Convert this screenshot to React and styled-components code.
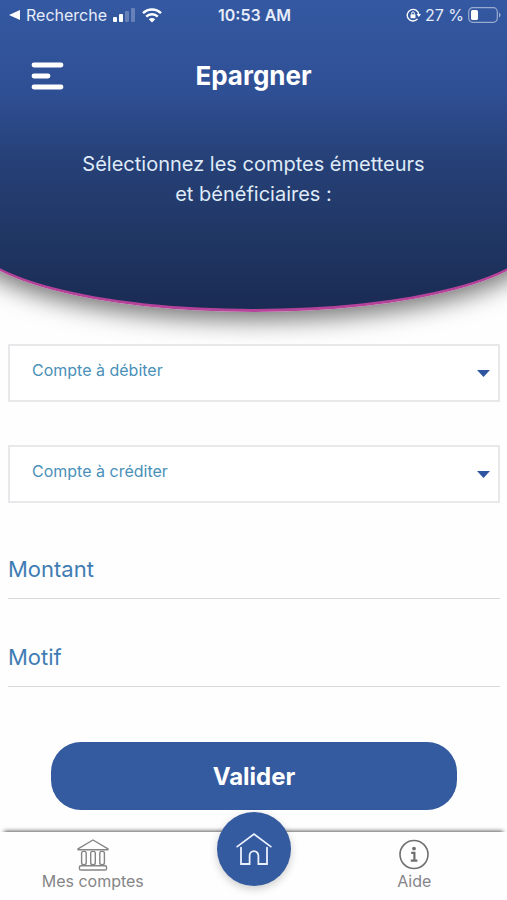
import { useState } from "react";
import styled, { createGlobalStyle } from "styled-components";

const GlobalStyle = createGlobalStyle`
  * {
    box-sizing: border-box;
  }
  body {
    margin: 0;
    background-color: #fefefe;
    font-family: Inter, "Liberation Sans", sans-serif;
  }
  button,
  input,
  select {
    font-family: inherit;
  }
`;

const Page = styled.div`
  display: flex;
  flex-direction: column;
  min-height: 100vh;
  overflow: hidden;
`;

/* wider than the window so that the curve is cut at both sides */
const Hero = styled.header`
  margin: 0 -32px;
  padding: 0 29px;
  height: 312px;
  color: #fff;
  background: linear-gradient(#3459a2 0%, #2f4f94 30%, #274179 50%, #1f3561 80%, #1a2b54 100%);
  border: 3px solid #b5439a;
  border-top: 0;
  border-radius: 0 0 50% 50% / 0 0 76px 76px;
  box-shadow: 0 8px 24px rgba(0, 0, 0, 0.55);
`;

const StatusBar = styled.div`
  display: grid;
  grid-template-columns: 1fr auto 1fr;
  align-items: center;
  height: 30px;
  padding: 0 6px 0 8px;
  font-size: 16px;
  color: #e6ecfa;
`;

const StatusGroup = styled.div`
  display: flex;
  align-items: center;
  justify-content: ${(props) => (props.$end ? "flex-end" : "flex-start")};
  gap: ${(props) => (props.$end ? "4px" : "6px")};
  white-space: nowrap;
`;

const Clock = styled.time`
  font-weight: 600;
`;

const TitleBar = styled.div`
  display: grid;
  grid-template-columns: 40px 1fr 40px;
  align-items: center;
  height: 60px;
  margin-top: 16px;
  padding: 0 28px;
`;

const MenuButton = styled.button`
  display: flex;
  align-items: center;
  justify-content: center;
  width: 40px;
  height: 40px;
  padding: 0;
  border: 0;
  background: none;
  color: #fff;
  cursor: pointer;
`;

const Title = styled.h1`
  margin: 0;
  font-size: 26px;
  line-height: 32px;
  font-weight: 700;
  text-align: center;
`;

const Intro = styled.p`
  max-width: 360px;
  margin: 43px auto 0;
  font-size: 20px;
  line-height: 30px;
  text-align: center;
  color: #dfebf8;
`;

const Form = styled.form`
  display: flex;
  flex: 1;
  flex-direction: column;
  padding: 32px 7px 22px 8px;
`;

const SelectBox = styled.div`
  display: grid;
  align-items: center;
  margin-bottom: 43px;
  border: 2px solid #e8e8ea;
  background-color: #fff;
  svg,
  select {
    grid-area: 1 / 1;
  }
  svg {
    justify-self: end;
    margin-right: 8px;
    pointer-events: none;
  }
`;

const Select = styled.select`
  width: 100%;
  height: 54px;
  padding: 0 32px 6px 22px;
  border: 0;
  background: none;
  appearance: none;
  font-size: 16px;
  color: #4a90b8;
`;

const Input = styled.input`
  width: 100%;
  height: 60px;
  margin-bottom: 28px;
  padding: 0;
  border: 0;
  border-bottom: 1px solid #d8d8da;
  border-radius: 0;
  background: none;
  outline: 0;
  font-size: 22px;
  color: #3f7cb4;
  &::placeholder {
    color: #3f7cb4;
    opacity: 1;
  }
`;

const Fields = styled.div`
  display: flex;
  flex-direction: column;
  margin: -7px 0 27px;
`;

const SubmitButton = styled.button`
  height: 68px;
  margin: 0 43px;
  border: 0;
  border-radius: 30px;
  background-color: #345a9f;
  color: #fff;
  font-size: 24px;
  font-weight: 700;
  cursor: pointer;
`;

const TabBar = styled.nav`
  display: grid;
  grid-template-columns: 1fr 136px 1fr;
  height: 68px;
  background-color: #fefefe;
  box-shadow: 0 -5px 4px -4px rgba(0, 0, 0, 0.65);
`;

const Tab = styled.a`
  display: flex;
  flex-direction: column;
  align-items: center;
  padding-top: 7px;
  font-size: 16px;
  line-height: 20px;
  color: #858587;
  text-decoration: none;
`;

const HomeButton = styled.a`
  display: flex;
  align-items: center;
  justify-content: center;
  justify-self: center;
  width: 74px;
  height: 74px;
  margin-top: -20px;
  border-radius: 50%;
  background-color: #345a9f;
  color: #fff;
  box-shadow: 0 3px 8px rgba(0, 0, 0, 0.2);
`;

const SignalIcon = () => (
  <svg width="23" height="14" viewBox="0 0 23 14" fill="#fff" aria-hidden="true">
    <rect x="0" y="9" width="4" height="5" rx="1" />
    <rect x="6" y="6" width="4" height="8" rx="1" />
    <rect x="12" y="3" width="4" height="11" rx="1" opacity="0.25" />
    <rect x="18" y="0" width="4" height="14" rx="1" opacity="0.25" />
  </svg>
);

const WifiIcon = () => (
  <svg width="20" height="15" viewBox="0 0 20 15" fill="none" stroke="#fff" strokeWidth="2.4" aria-hidden="true">
    <path d="M1 5.2A12.8 12.8 0 0 1 19 5.2" />
    <path d="M4.2 8.6A8.2 8.2 0 0 1 15.8 8.6" />
    <path d="M10 14.6L6.8 11.3A4.5 4.5 0 0 1 13.2 11.3Z" fill="#fff" stroke="none" />
  </svg>
);

const RotationLockIcon = () => (
  <svg width="15" height="14" viewBox="0 0 15 14" fill="none" stroke="#fff" strokeWidth="1.4" aria-hidden="true">
    <path d="M11.5 10.9A5.8 5.8 0 1 1 12.8 6.3" />
    <path d="M10.6 6H15L12.8 9Z" fill="#fff" stroke="none" />
    <rect x="4.5" y="6.2" width="5" height="4" rx="0.6" fill="#fff" stroke="none" />
    <path d="M5.6 6.4V5.3a1.4 1.4 0 0 1 2.8 0v1.1" strokeWidth="1" />
  </svg>
);

const BatteryIcon = () => (
  <svg width="33" height="16" viewBox="0 0 33 16" fill="none" aria-hidden="true">
    <rect x="0.7" y="0.7" width="28.6" height="14.6" rx="4" stroke="#fff" strokeOpacity="0.5" strokeWidth="1.2" />
    <rect x="3" y="3" width="7" height="10" rx="1.6" fill="#fff" />
    <path d="M31 5.6c2 .8 2 4 0 4.8z" fill="#fff" fillOpacity="0.5" />
  </svg>
);

const MenuIcon = () => (
  <svg width="34" height="28" viewBox="0 0 34 28" stroke="#fff" strokeWidth="4.8" strokeLinecap="round" aria-hidden="true">
    <path d="M3 3H30M3 14H17M3 25H30" />
  </svg>
);

const CaretIcon = () => (
  <svg width="13" height="7" viewBox="0 0 13 7" fill="#2f55a0" aria-hidden="true">
    <path d="M0 0H13L6.5 7Z" />
  </svg>
);

const BankIcon = () => (
  <svg width="32" height="32" viewBox="0 0 32 32" fill="none" stroke="#858587" strokeWidth="1.4" strokeLinejoin="round" aria-hidden="true">
    <path d="M1 10.8V9.8L16 1L31 9.8V10.8Z" />
    <rect x="4.6" y="12.4" width="4.6" height="13.2" rx="1.8" />
    <rect x="13.7" y="12.4" width="4.6" height="13.2" rx="1.8" />
    <rect x="22.8" y="12.4" width="4.6" height="13.2" rx="1.8" />
    <rect x="2.4" y="26.8" width="27.2" height="4.2" rx="1.6" />
  </svg>
);

const InfoIcon = () => (
  <svg width="32" height="32" viewBox="0 0 32 32" fill="none" stroke="#6f6f71" aria-hidden="true">
    <circle cx="16" cy="15.5" r="14" strokeWidth="1.6" />
    <circle cx="16" cy="9.6" r="1.9" fill="#6f6f71" stroke="none" />
    <path d="M13.2 13.8H16.4V21.6M12.8 21.6H19.4" strokeWidth="2.2" />
  </svg>
);

const HomeIcon = () => (
  <svg width="36" height="34" viewBox="0 0 36 34" fill="none" stroke="#e8f0ff" strokeWidth="1.8" strokeLinecap="round" aria-hidden="true">
    <path d="M1.2 14.6L18 2L34.8 14.6" />
    <path d="M5 15.6V32H13.6V23.6a4.4 4.4 0 0 1 8.8 0V32H31V15.6" />
  </svg>
);

const AccountSelect = ({ label, name }) => (
  <SelectBox>
    <Select name={name} aria-label={label}>
      <option>{label}</option>
    </Select>
    <CaretIcon />
  </SelectBox>
);

const App = () => {
  const [montant, setMontant] = useState("");
  const [motif, setMotif] = useState("");

  const handleSubmit = (e) => {
    e.preventDefault();
  };

  return (
    <Page>
      <GlobalStyle />
      <Hero>
        <StatusBar>
          <StatusGroup>
            <svg width="12" height="12" viewBox="0 0 12 12" fill="#fff" aria-hidden="true">
              <path d="M1 6L12 1V11Z" />
            </svg>
            <span>Recherche</span>
            <SignalIcon />
            <WifiIcon />
          </StatusGroup>
          <Clock>10:53 AM</Clock>
          <StatusGroup $end>
            <RotationLockIcon />
            <span>27 %</span>
            <BatteryIcon />
          </StatusGroup>
        </StatusBar>
        <TitleBar>
          <MenuButton type="button" aria-label="Menu">
            <MenuIcon />
          </MenuButton>
          <Title>Epargner</Title>
        </TitleBar>
        <Intro>Sélectionnez les comptes émetteurs et bénéficiaires :</Intro>
      </Hero>
      <Form onSubmit={handleSubmit}>
        <AccountSelect label="Compte à débiter" name="debit" />
        <AccountSelect label="Compte à créditer" name="credit" />
        <Fields>
          <Input
            type="text"
            aria-label="Montant"
            placeholder="Montant"
            value={montant}
            onChange={(e) => setMontant(e.target.value)}
          />
          <Input
            type="text"
            aria-label="Motif"
            placeholder="Motif"
            value={motif}
            onChange={(e) => setMotif(e.target.value)}
          />
        </Fields>
        <SubmitButton type="submit">Valider</SubmitButton>
      </Form>
      <TabBar>
        <Tab href="#comptes">
          <BankIcon />
          Mes comptes
        </Tab>
        <HomeButton href="#accueil" aria-label="Accueil">
          <HomeIcon />
        </HomeButton>
        <Tab href="#aide">
          <InfoIcon />
          Aide
        </Tab>
      </TabBar>
    </Page>
  );
};

export default App;
